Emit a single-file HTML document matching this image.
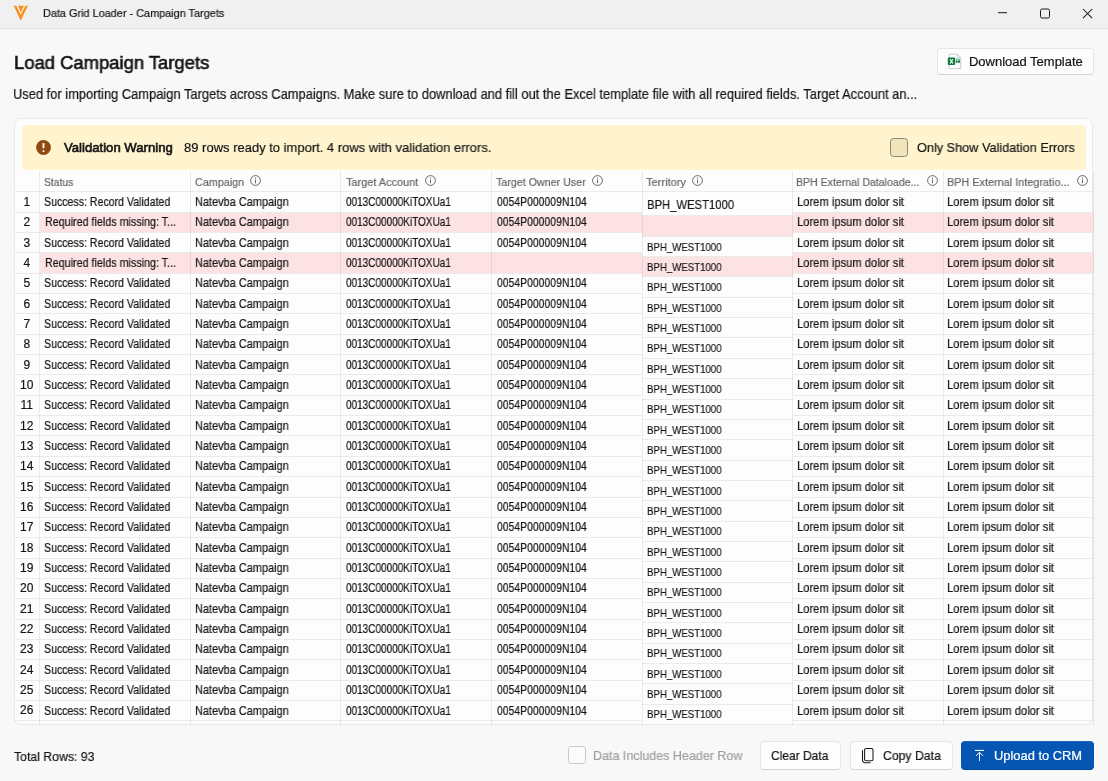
<!DOCTYPE html>
<html><head><meta charset="utf-8">
<style>
*{box-sizing:border-box;margin:0;padding:0}
html,body{width:1108px;height:781px;overflow:hidden;background:#f8f8f8;font-family:"Liberation Sans",sans-serif;color:#141414}
.abs{position:absolute}
.tx{position:absolute;white-space:nowrap;transform-origin:0 0;will-change:transform}
#titlebar{position:absolute;left:0;top:0;width:1108px;height:29px;background:#f0f0f0;border-bottom:1px solid #e2e2e2}
.btn{position:absolute;background:#fdfdfd;border:1px solid #e5e5e5;border-bottom-color:#d2d2d2;border-radius:4px}
#card{position:absolute;left:14px;top:118px;width:1078.5px;height:607px;background:#fdfdfd;border:1px solid #eaeaea;border-radius:7px}
#banner{position:absolute;left:21.5px;top:124.7px;width:1064.5px;height:45px;background:#fff4ce;border-radius:3.5px}
#grid{position:absolute;left:14px;top:170.5px;width:1080px;height:554.5px;overflow:hidden;border-bottom-left-radius:6px}
.hl{position:absolute;left:0;width:1080px;height:1px;background:#ebebeb}
.pink{position:absolute;left:25.5px;width:1054.5px;background:#fde2e4}
.tc{position:absolute;width:150.60px;border-top:1px solid #ebebeb}
.vl{position:absolute;top:0;width:1px;height:554.5px;background:rgba(0,0,0,0.075)}
.num{position:absolute;left:14px;width:25.5px;text-align:center;white-space:nowrap;color:#141414;will-change:transform;-webkit-text-stroke:0.2px #141414}
</style></head><body>
<div id="titlebar"></div>
<svg class="abs" style="left:0;top:0" width="40" height="28" viewBox="0 0 40 28">
  <polygon points="13.8,5.8 16.3,5.8 20.7,14.7 25.4,5.8 28.0,5.8 20.9,20.2 20.4,20.2" fill="#f8911c"/>
  <polygon points="18.0,5.8 23.9,5.8 20.9,12.2" fill="#f8911c"/>
</svg>
<svg class="abs" style="left:997px;top:8px" width="12" height="10" viewBox="0 0 12 10"><rect x="1" y="4.2" width="9" height="1" fill="#1a1a1a"/></svg>
<svg class="abs" style="left:1039px;top:8px" width="12" height="12" viewBox="0 0 12 12"><rect x="1.5" y="1" width="9" height="9" rx="1.6" fill="none" stroke="#1a1a1a" stroke-width="1"/></svg>
<svg class="abs" style="left:1082px;top:8px" width="12" height="12" viewBox="0 0 12 12"><path d="M1 1 L10.2 10.2 M10.2 1 L1 10.2" stroke="#1a1a1a" stroke-width="1.05" fill="none"/></svg>

<div class="btn" style="left:936.5px;top:47.5px;width:157px;height:27.5px"></div>
<svg class="abs" style="left:947px;top:53px" width="15" height="17" viewBox="0 0 15 17">
  <path d="M2.2 1.2 H10.4 L13.7 4.5 V15.6 H2.2 Z" fill="#fff" stroke="#c4c4c4" stroke-width="0.9"/>
  <path d="M10.4 1.2 V4.5 H13.7" fill="none" stroke="#c4c4c4" stroke-width="0.8"/>
  <rect x="8.8" y="5.7" width="1.8" height="2.1" fill="#5cc993"/><rect x="11.0" y="5.7" width="2.0" height="2.1" fill="#5cc993"/>
  <rect x="8.8" y="7.8" width="1.8" height="1.9" fill="#1d6e40"/><rect x="11.0" y="7.8" width="2.0" height="1.9" fill="#1d6e40"/>
  <rect x="0.8" y="4.5" width="7.4" height="7.6" rx="1" fill="#107c41"/>
  <path d="M3.1 6.3 L5.9 10.5 M5.9 6.3 L3.1 10.5" stroke="#fff" stroke-width="1.15"/>
</svg>

<div id="card"></div>
<div id="banner"></div>
<svg class="abs" style="left:35.5px;top:140px" width="15" height="15" viewBox="0 0 15 15"><circle cx="7.5" cy="7.5" r="7.4" fill="#8f4b0f"/><rect x="6.55" y="3.1" width="1.9" height="5.2" rx="0.6" fill="#fff"/><rect x="6.55" y="10.2" width="1.9" height="1.7" rx="0.5" fill="#fff"/></svg>
<div class="abs" style="left:889.5px;top:138px;width:18.5px;height:18.5px;border:1px solid #8b8878;background:#f1e4b9;border-radius:3.5px"></div>

<div id="grid">
<div class="hl" style="top:20.90px"></div>
<div class="hl" style="top:41.24px"></div>
<div class="pink" style="top:42.24px;height:19.34px"></div>
<div class="hl" style="top:61.58px"></div>
<div class="hl" style="top:81.92px"></div>
<div class="pink" style="top:82.92px;height:19.34px"></div>
<div class="hl" style="top:102.26px"></div>
<div class="hl" style="top:122.60px"></div>
<div class="hl" style="top:142.94px"></div>
<div class="hl" style="top:163.28px"></div>
<div class="hl" style="top:183.62px"></div>
<div class="hl" style="top:203.96px"></div>
<div class="hl" style="top:224.30px"></div>
<div class="hl" style="top:244.64px"></div>
<div class="hl" style="top:264.98px"></div>
<div class="hl" style="top:285.32px"></div>
<div class="hl" style="top:305.66px"></div>
<div class="hl" style="top:326.00px"></div>
<div class="hl" style="top:346.34px"></div>
<div class="hl" style="top:366.68px"></div>
<div class="hl" style="top:387.02px"></div>
<div class="hl" style="top:407.36px"></div>
<div class="hl" style="top:427.70px"></div>
<div class="hl" style="top:448.04px"></div>
<div class="hl" style="top:468.38px"></div>
<div class="hl" style="top:488.72px"></div>
<div class="hl" style="top:509.06px"></div>
<div class="hl" style="top:529.40px"></div>
<div class="hl" style="top:549.74px"></div>
<div class="tc" style="left:628.00px;top:20.90px;height:24.04px;background:#fdfdfd"></div>
<div class="tc" style="left:628.00px;top:44.94px;height:20.34px;background:#fde2e4"></div>
<div class="tc" style="left:628.00px;top:65.28px;height:20.34px;background:#fdfdfd"></div>
<div class="tc" style="left:628.00px;top:85.62px;height:20.34px;background:#fde2e4"></div>
<div class="tc" style="left:628.00px;top:105.96px;height:20.34px;background:#fdfdfd"></div>
<div class="tc" style="left:628.00px;top:126.30px;height:20.34px;background:#fdfdfd"></div>
<div class="tc" style="left:628.00px;top:146.64px;height:20.34px;background:#fdfdfd"></div>
<div class="tc" style="left:628.00px;top:166.98px;height:20.34px;background:#fdfdfd"></div>
<div class="tc" style="left:628.00px;top:187.32px;height:20.34px;background:#fdfdfd"></div>
<div class="tc" style="left:628.00px;top:207.66px;height:20.34px;background:#fdfdfd"></div>
<div class="tc" style="left:628.00px;top:228.00px;height:20.34px;background:#fdfdfd"></div>
<div class="tc" style="left:628.00px;top:248.34px;height:20.34px;background:#fdfdfd"></div>
<div class="tc" style="left:628.00px;top:268.68px;height:20.34px;background:#fdfdfd"></div>
<div class="tc" style="left:628.00px;top:289.02px;height:20.34px;background:#fdfdfd"></div>
<div class="tc" style="left:628.00px;top:309.36px;height:20.34px;background:#fdfdfd"></div>
<div class="tc" style="left:628.00px;top:329.70px;height:20.34px;background:#fdfdfd"></div>
<div class="tc" style="left:628.00px;top:350.04px;height:20.34px;background:#fdfdfd"></div>
<div class="tc" style="left:628.00px;top:370.38px;height:20.34px;background:#fdfdfd"></div>
<div class="tc" style="left:628.00px;top:390.72px;height:20.34px;background:#fdfdfd"></div>
<div class="tc" style="left:628.00px;top:411.06px;height:20.34px;background:#fdfdfd"></div>
<div class="tc" style="left:628.00px;top:431.40px;height:20.34px;background:#fdfdfd"></div>
<div class="tc" style="left:628.00px;top:451.74px;height:20.34px;background:#fdfdfd"></div>
<div class="tc" style="left:628.00px;top:472.08px;height:20.34px;background:#fdfdfd"></div>
<div class="tc" style="left:628.00px;top:492.42px;height:20.34px;background:#fdfdfd"></div>
<div class="tc" style="left:628.00px;top:512.76px;height:20.34px;background:#fdfdfd"></div>
<div class="tc" style="left:628.00px;top:533.10px;height:20.34px;background:#fdfdfd"></div>
<div class="tc" style="left:628.00px;top:553.44px;height:20.34px;background:#fdfdfd"></div>
<div class="vl" style="left:25.00px"></div>
<div class="vl" style="left:175.90px"></div>
<div class="vl" style="left:326.10px"></div>
<div class="vl" style="left:476.90px"></div>
<div class="vl" style="left:627.50px"></div>
<div class="vl" style="left:778.10px"></div>
<div class="vl" style="left:928.50px"></div>
<div class="vl" style="left:1078.80px"></div>
</div>
<div class="abs" style="left:250.1px;top:175.1px;line-height:0"><svg width="11" height="11" viewBox="0 0 11 11"><circle cx="5.5" cy="5.5" r="4.9" fill="none" stroke="#606060" stroke-width="0.95"/><rect x="5.05" y="4.6" width="0.95" height="3.6" fill="#606060"/><circle cx="5.5" cy="3.2" r="0.6" fill="#606060"/></svg></div><div class="abs" style="left:425.0px;top:175.1px;line-height:0"><svg width="11" height="11" viewBox="0 0 11 11"><circle cx="5.5" cy="5.5" r="4.9" fill="none" stroke="#606060" stroke-width="0.95"/><rect x="5.05" y="4.6" width="0.95" height="3.6" fill="#606060"/><circle cx="5.5" cy="3.2" r="0.6" fill="#606060"/></svg></div><div class="abs" style="left:591.8px;top:175.1px;line-height:0"><svg width="11" height="11" viewBox="0 0 11 11"><circle cx="5.5" cy="5.5" r="4.9" fill="none" stroke="#606060" stroke-width="0.95"/><rect x="5.05" y="4.6" width="0.95" height="3.6" fill="#606060"/><circle cx="5.5" cy="3.2" r="0.6" fill="#606060"/></svg></div><div class="abs" style="left:692.1px;top:175.1px;line-height:0"><svg width="11" height="11" viewBox="0 0 11 11"><circle cx="5.5" cy="5.5" r="4.9" fill="none" stroke="#606060" stroke-width="0.95"/><rect x="5.05" y="4.6" width="0.95" height="3.6" fill="#606060"/><circle cx="5.5" cy="3.2" r="0.6" fill="#606060"/></svg></div><div class="abs" style="left:927.2px;top:175.1px;line-height:0"><svg width="11" height="11" viewBox="0 0 11 11"><circle cx="5.5" cy="5.5" r="4.9" fill="none" stroke="#606060" stroke-width="0.95"/><rect x="5.05" y="4.6" width="0.95" height="3.6" fill="#606060"/><circle cx="5.5" cy="3.2" r="0.6" fill="#606060"/></svg></div><div class="abs" style="left:1077.2px;top:175.1px;line-height:0"><svg width="11" height="11" viewBox="0 0 11 11"><circle cx="5.5" cy="5.5" r="4.9" fill="none" stroke="#606060" stroke-width="0.95"/><rect x="5.05" y="4.6" width="0.95" height="3.6" fill="#606060"/><circle cx="5.5" cy="3.2" r="0.6" fill="#606060"/></svg></div>
<div class="abs" style="left:0;top:0;width:1108px;height:724.5px;overflow:hidden">
<div class="num" style="top:195.84px;font-size:12.0px;line-height:12.0px">1</div>
<div class="tx" style="left:44.23px;top:196.00px;font-size:12.2px;line-height:12.2px;transform:scaleX(0.8681);color:#141414;-webkit-text-stroke:0.2px #141414;">Success: Record Validated</div>
<div class="tx" style="left:195.30px;top:196.00px;font-size:12.2px;line-height:12.2px;transform:scaleX(0.8990);color:#141414;-webkit-text-stroke:0.2px #141414;">Natevba Campaign</div>
<div class="tx" style="left:346.00px;top:196.00px;font-size:12.2px;line-height:12.2px;transform:scaleX(0.8203);color:#141414;-webkit-text-stroke:0.2px #141414;">0013C00000KiTOXUa1</div>
<div class="tx" style="left:496.70px;top:196.00px;font-size:12.2px;line-height:12.2px;transform:scaleX(0.8543);color:#141414;-webkit-text-stroke:0.2px #141414;">0054P000009N104</div>
<div class="tx" style="left:796.88px;top:196.00px;font-size:12.2px;line-height:12.2px;transform:scaleX(0.9181);color:#141414;-webkit-text-stroke:0.2px #141414;">Lorem ipsum dolor sit</div>
<div class="tx" style="left:947.28px;top:196.00px;font-size:12.2px;line-height:12.2px;transform:scaleX(0.9181);color:#141414;-webkit-text-stroke:0.2px #141414;">Lorem ipsum dolor sit</div>
<div class="tx" style="left:647.08px;top:198.00px;font-size:13.7px;line-height:13.7px;transform:scaleX(0.8229);color:#141414;-webkit-text-stroke:0.2px #141414;">BPH_WEST1000</div>
<div class="num" style="top:216.18px;font-size:12.0px;line-height:12.0px">2</div>
<div class="tx" style="left:44.82px;top:216.34px;font-size:12.2px;line-height:12.2px;transform:scaleX(0.8803);color:#141414;-webkit-text-stroke:0.2px #141414;">Required fields missing: T...</div>
<div class="tx" style="left:195.30px;top:216.34px;font-size:12.2px;line-height:12.2px;transform:scaleX(0.8990);color:#141414;-webkit-text-stroke:0.2px #141414;">Natevba Campaign</div>
<div class="tx" style="left:346.00px;top:216.34px;font-size:12.2px;line-height:12.2px;transform:scaleX(0.8203);color:#141414;-webkit-text-stroke:0.2px #141414;">0013C00000KiTOXUa1</div>
<div class="tx" style="left:496.70px;top:216.34px;font-size:12.2px;line-height:12.2px;transform:scaleX(0.8543);color:#141414;-webkit-text-stroke:0.2px #141414;">0054P000009N104</div>
<div class="tx" style="left:796.88px;top:216.34px;font-size:12.2px;line-height:12.2px;transform:scaleX(0.9181);color:#141414;-webkit-text-stroke:0.2px #141414;">Lorem ipsum dolor sit</div>
<div class="tx" style="left:947.28px;top:216.34px;font-size:12.2px;line-height:12.2px;transform:scaleX(0.9181);color:#141414;-webkit-text-stroke:0.2px #141414;">Lorem ipsum dolor sit</div>
<div class="num" style="top:236.52px;font-size:12.0px;line-height:12.0px">3</div>
<div class="tx" style="left:44.23px;top:236.68px;font-size:12.2px;line-height:12.2px;transform:scaleX(0.8681);color:#141414;-webkit-text-stroke:0.2px #141414;">Success: Record Validated</div>
<div class="tx" style="left:195.30px;top:236.68px;font-size:12.2px;line-height:12.2px;transform:scaleX(0.8990);color:#141414;-webkit-text-stroke:0.2px #141414;">Natevba Campaign</div>
<div class="tx" style="left:346.00px;top:236.68px;font-size:12.2px;line-height:12.2px;transform:scaleX(0.8203);color:#141414;-webkit-text-stroke:0.2px #141414;">0013C00000KiTOXUa1</div>
<div class="tx" style="left:496.70px;top:236.68px;font-size:12.2px;line-height:12.2px;transform:scaleX(0.8543);color:#141414;-webkit-text-stroke:0.2px #141414;">0054P000009N104</div>
<div class="tx" style="left:796.88px;top:236.68px;font-size:12.2px;line-height:12.2px;transform:scaleX(0.9181);color:#141414;-webkit-text-stroke:0.2px #141414;">Lorem ipsum dolor sit</div>
<div class="tx" style="left:947.28px;top:236.68px;font-size:12.2px;line-height:12.2px;transform:scaleX(0.9181);color:#141414;-webkit-text-stroke:0.2px #141414;">Lorem ipsum dolor sit</div>
<div class="tx" style="left:647.15px;top:241.66px;font-size:11.4px;line-height:11.4px;transform:scaleX(0.8471);color:#141414;-webkit-text-stroke:0.2px #141414;">BPH_WEST1000</div>
<div class="num" style="top:256.86px;font-size:12.0px;line-height:12.0px">4</div>
<div class="tx" style="left:44.82px;top:257.02px;font-size:12.2px;line-height:12.2px;transform:scaleX(0.8803);color:#141414;-webkit-text-stroke:0.2px #141414;">Required fields missing: T...</div>
<div class="tx" style="left:195.30px;top:257.02px;font-size:12.2px;line-height:12.2px;transform:scaleX(0.8990);color:#141414;-webkit-text-stroke:0.2px #141414;">Natevba Campaign</div>
<div class="tx" style="left:346.00px;top:257.02px;font-size:12.2px;line-height:12.2px;transform:scaleX(0.8203);color:#141414;-webkit-text-stroke:0.2px #141414;">0013C00000KiTOXUa1</div>
<div class="tx" style="left:796.88px;top:257.02px;font-size:12.2px;line-height:12.2px;transform:scaleX(0.9181);color:#141414;-webkit-text-stroke:0.2px #141414;">Lorem ipsum dolor sit</div>
<div class="tx" style="left:947.28px;top:257.02px;font-size:12.2px;line-height:12.2px;transform:scaleX(0.9181);color:#141414;-webkit-text-stroke:0.2px #141414;">Lorem ipsum dolor sit</div>
<div class="tx" style="left:647.15px;top:262.00px;font-size:11.4px;line-height:11.4px;transform:scaleX(0.8471);color:#141414;-webkit-text-stroke:0.2px #141414;">BPH_WEST1000</div>
<div class="num" style="top:277.20px;font-size:12.0px;line-height:12.0px">5</div>
<div class="tx" style="left:44.23px;top:277.36px;font-size:12.2px;line-height:12.2px;transform:scaleX(0.8681);color:#141414;-webkit-text-stroke:0.2px #141414;">Success: Record Validated</div>
<div class="tx" style="left:195.30px;top:277.36px;font-size:12.2px;line-height:12.2px;transform:scaleX(0.8990);color:#141414;-webkit-text-stroke:0.2px #141414;">Natevba Campaign</div>
<div class="tx" style="left:346.00px;top:277.36px;font-size:12.2px;line-height:12.2px;transform:scaleX(0.8203);color:#141414;-webkit-text-stroke:0.2px #141414;">0013C00000KiTOXUa1</div>
<div class="tx" style="left:496.70px;top:277.36px;font-size:12.2px;line-height:12.2px;transform:scaleX(0.8543);color:#141414;-webkit-text-stroke:0.2px #141414;">0054P000009N104</div>
<div class="tx" style="left:796.88px;top:277.36px;font-size:12.2px;line-height:12.2px;transform:scaleX(0.9181);color:#141414;-webkit-text-stroke:0.2px #141414;">Lorem ipsum dolor sit</div>
<div class="tx" style="left:947.28px;top:277.36px;font-size:12.2px;line-height:12.2px;transform:scaleX(0.9181);color:#141414;-webkit-text-stroke:0.2px #141414;">Lorem ipsum dolor sit</div>
<div class="tx" style="left:647.15px;top:282.34px;font-size:11.4px;line-height:11.4px;transform:scaleX(0.8471);color:#141414;-webkit-text-stroke:0.2px #141414;">BPH_WEST1000</div>
<div class="num" style="top:297.54px;font-size:12.0px;line-height:12.0px">6</div>
<div class="tx" style="left:44.23px;top:297.70px;font-size:12.2px;line-height:12.2px;transform:scaleX(0.8681);color:#141414;-webkit-text-stroke:0.2px #141414;">Success: Record Validated</div>
<div class="tx" style="left:195.30px;top:297.70px;font-size:12.2px;line-height:12.2px;transform:scaleX(0.8990);color:#141414;-webkit-text-stroke:0.2px #141414;">Natevba Campaign</div>
<div class="tx" style="left:346.00px;top:297.70px;font-size:12.2px;line-height:12.2px;transform:scaleX(0.8203);color:#141414;-webkit-text-stroke:0.2px #141414;">0013C00000KiTOXUa1</div>
<div class="tx" style="left:496.70px;top:297.70px;font-size:12.2px;line-height:12.2px;transform:scaleX(0.8543);color:#141414;-webkit-text-stroke:0.2px #141414;">0054P000009N104</div>
<div class="tx" style="left:796.88px;top:297.70px;font-size:12.2px;line-height:12.2px;transform:scaleX(0.9181);color:#141414;-webkit-text-stroke:0.2px #141414;">Lorem ipsum dolor sit</div>
<div class="tx" style="left:947.28px;top:297.70px;font-size:12.2px;line-height:12.2px;transform:scaleX(0.9181);color:#141414;-webkit-text-stroke:0.2px #141414;">Lorem ipsum dolor sit</div>
<div class="tx" style="left:647.15px;top:302.68px;font-size:11.4px;line-height:11.4px;transform:scaleX(0.8471);color:#141414;-webkit-text-stroke:0.2px #141414;">BPH_WEST1000</div>
<div class="num" style="top:317.88px;font-size:12.0px;line-height:12.0px">7</div>
<div class="tx" style="left:44.23px;top:318.04px;font-size:12.2px;line-height:12.2px;transform:scaleX(0.8681);color:#141414;-webkit-text-stroke:0.2px #141414;">Success: Record Validated</div>
<div class="tx" style="left:195.30px;top:318.04px;font-size:12.2px;line-height:12.2px;transform:scaleX(0.8990);color:#141414;-webkit-text-stroke:0.2px #141414;">Natevba Campaign</div>
<div class="tx" style="left:346.00px;top:318.04px;font-size:12.2px;line-height:12.2px;transform:scaleX(0.8203);color:#141414;-webkit-text-stroke:0.2px #141414;">0013C00000KiTOXUa1</div>
<div class="tx" style="left:496.70px;top:318.04px;font-size:12.2px;line-height:12.2px;transform:scaleX(0.8543);color:#141414;-webkit-text-stroke:0.2px #141414;">0054P000009N104</div>
<div class="tx" style="left:796.88px;top:318.04px;font-size:12.2px;line-height:12.2px;transform:scaleX(0.9181);color:#141414;-webkit-text-stroke:0.2px #141414;">Lorem ipsum dolor sit</div>
<div class="tx" style="left:947.28px;top:318.04px;font-size:12.2px;line-height:12.2px;transform:scaleX(0.9181);color:#141414;-webkit-text-stroke:0.2px #141414;">Lorem ipsum dolor sit</div>
<div class="tx" style="left:647.15px;top:323.02px;font-size:11.4px;line-height:11.4px;transform:scaleX(0.8471);color:#141414;-webkit-text-stroke:0.2px #141414;">BPH_WEST1000</div>
<div class="num" style="top:338.22px;font-size:12.0px;line-height:12.0px">8</div>
<div class="tx" style="left:44.23px;top:338.38px;font-size:12.2px;line-height:12.2px;transform:scaleX(0.8681);color:#141414;-webkit-text-stroke:0.2px #141414;">Success: Record Validated</div>
<div class="tx" style="left:195.30px;top:338.38px;font-size:12.2px;line-height:12.2px;transform:scaleX(0.8990);color:#141414;-webkit-text-stroke:0.2px #141414;">Natevba Campaign</div>
<div class="tx" style="left:346.00px;top:338.38px;font-size:12.2px;line-height:12.2px;transform:scaleX(0.8203);color:#141414;-webkit-text-stroke:0.2px #141414;">0013C00000KiTOXUa1</div>
<div class="tx" style="left:496.70px;top:338.38px;font-size:12.2px;line-height:12.2px;transform:scaleX(0.8543);color:#141414;-webkit-text-stroke:0.2px #141414;">0054P000009N104</div>
<div class="tx" style="left:796.88px;top:338.38px;font-size:12.2px;line-height:12.2px;transform:scaleX(0.9181);color:#141414;-webkit-text-stroke:0.2px #141414;">Lorem ipsum dolor sit</div>
<div class="tx" style="left:947.28px;top:338.38px;font-size:12.2px;line-height:12.2px;transform:scaleX(0.9181);color:#141414;-webkit-text-stroke:0.2px #141414;">Lorem ipsum dolor sit</div>
<div class="tx" style="left:647.15px;top:343.36px;font-size:11.4px;line-height:11.4px;transform:scaleX(0.8471);color:#141414;-webkit-text-stroke:0.2px #141414;">BPH_WEST1000</div>
<div class="num" style="top:358.56px;font-size:12.0px;line-height:12.0px">9</div>
<div class="tx" style="left:44.23px;top:358.72px;font-size:12.2px;line-height:12.2px;transform:scaleX(0.8681);color:#141414;-webkit-text-stroke:0.2px #141414;">Success: Record Validated</div>
<div class="tx" style="left:195.30px;top:358.72px;font-size:12.2px;line-height:12.2px;transform:scaleX(0.8990);color:#141414;-webkit-text-stroke:0.2px #141414;">Natevba Campaign</div>
<div class="tx" style="left:346.00px;top:358.72px;font-size:12.2px;line-height:12.2px;transform:scaleX(0.8203);color:#141414;-webkit-text-stroke:0.2px #141414;">0013C00000KiTOXUa1</div>
<div class="tx" style="left:496.70px;top:358.72px;font-size:12.2px;line-height:12.2px;transform:scaleX(0.8543);color:#141414;-webkit-text-stroke:0.2px #141414;">0054P000009N104</div>
<div class="tx" style="left:796.88px;top:358.72px;font-size:12.2px;line-height:12.2px;transform:scaleX(0.9181);color:#141414;-webkit-text-stroke:0.2px #141414;">Lorem ipsum dolor sit</div>
<div class="tx" style="left:947.28px;top:358.72px;font-size:12.2px;line-height:12.2px;transform:scaleX(0.9181);color:#141414;-webkit-text-stroke:0.2px #141414;">Lorem ipsum dolor sit</div>
<div class="tx" style="left:647.15px;top:363.70px;font-size:11.4px;line-height:11.4px;transform:scaleX(0.8471);color:#141414;-webkit-text-stroke:0.2px #141414;">BPH_WEST1000</div>
<div class="num" style="top:378.90px;font-size:12.0px;line-height:12.0px">10</div>
<div class="tx" style="left:44.23px;top:379.06px;font-size:12.2px;line-height:12.2px;transform:scaleX(0.8681);color:#141414;-webkit-text-stroke:0.2px #141414;">Success: Record Validated</div>
<div class="tx" style="left:195.30px;top:379.06px;font-size:12.2px;line-height:12.2px;transform:scaleX(0.8990);color:#141414;-webkit-text-stroke:0.2px #141414;">Natevba Campaign</div>
<div class="tx" style="left:346.00px;top:379.06px;font-size:12.2px;line-height:12.2px;transform:scaleX(0.8203);color:#141414;-webkit-text-stroke:0.2px #141414;">0013C00000KiTOXUa1</div>
<div class="tx" style="left:496.70px;top:379.06px;font-size:12.2px;line-height:12.2px;transform:scaleX(0.8543);color:#141414;-webkit-text-stroke:0.2px #141414;">0054P000009N104</div>
<div class="tx" style="left:796.88px;top:379.06px;font-size:12.2px;line-height:12.2px;transform:scaleX(0.9181);color:#141414;-webkit-text-stroke:0.2px #141414;">Lorem ipsum dolor sit</div>
<div class="tx" style="left:947.28px;top:379.06px;font-size:12.2px;line-height:12.2px;transform:scaleX(0.9181);color:#141414;-webkit-text-stroke:0.2px #141414;">Lorem ipsum dolor sit</div>
<div class="tx" style="left:647.15px;top:384.04px;font-size:11.4px;line-height:11.4px;transform:scaleX(0.8471);color:#141414;-webkit-text-stroke:0.2px #141414;">BPH_WEST1000</div>
<div class="num" style="top:399.24px;font-size:12.0px;line-height:12.0px">11</div>
<div class="tx" style="left:44.23px;top:399.40px;font-size:12.2px;line-height:12.2px;transform:scaleX(0.8681);color:#141414;-webkit-text-stroke:0.2px #141414;">Success: Record Validated</div>
<div class="tx" style="left:195.30px;top:399.40px;font-size:12.2px;line-height:12.2px;transform:scaleX(0.8990);color:#141414;-webkit-text-stroke:0.2px #141414;">Natevba Campaign</div>
<div class="tx" style="left:346.00px;top:399.40px;font-size:12.2px;line-height:12.2px;transform:scaleX(0.8203);color:#141414;-webkit-text-stroke:0.2px #141414;">0013C00000KiTOXUa1</div>
<div class="tx" style="left:496.70px;top:399.40px;font-size:12.2px;line-height:12.2px;transform:scaleX(0.8543);color:#141414;-webkit-text-stroke:0.2px #141414;">0054P000009N104</div>
<div class="tx" style="left:796.88px;top:399.40px;font-size:12.2px;line-height:12.2px;transform:scaleX(0.9181);color:#141414;-webkit-text-stroke:0.2px #141414;">Lorem ipsum dolor sit</div>
<div class="tx" style="left:947.28px;top:399.40px;font-size:12.2px;line-height:12.2px;transform:scaleX(0.9181);color:#141414;-webkit-text-stroke:0.2px #141414;">Lorem ipsum dolor sit</div>
<div class="tx" style="left:647.15px;top:404.38px;font-size:11.4px;line-height:11.4px;transform:scaleX(0.8471);color:#141414;-webkit-text-stroke:0.2px #141414;">BPH_WEST1000</div>
<div class="num" style="top:419.58px;font-size:12.0px;line-height:12.0px">12</div>
<div class="tx" style="left:44.23px;top:419.74px;font-size:12.2px;line-height:12.2px;transform:scaleX(0.8681);color:#141414;-webkit-text-stroke:0.2px #141414;">Success: Record Validated</div>
<div class="tx" style="left:195.30px;top:419.74px;font-size:12.2px;line-height:12.2px;transform:scaleX(0.8990);color:#141414;-webkit-text-stroke:0.2px #141414;">Natevba Campaign</div>
<div class="tx" style="left:346.00px;top:419.74px;font-size:12.2px;line-height:12.2px;transform:scaleX(0.8203);color:#141414;-webkit-text-stroke:0.2px #141414;">0013C00000KiTOXUa1</div>
<div class="tx" style="left:496.70px;top:419.74px;font-size:12.2px;line-height:12.2px;transform:scaleX(0.8543);color:#141414;-webkit-text-stroke:0.2px #141414;">0054P000009N104</div>
<div class="tx" style="left:796.88px;top:419.74px;font-size:12.2px;line-height:12.2px;transform:scaleX(0.9181);color:#141414;-webkit-text-stroke:0.2px #141414;">Lorem ipsum dolor sit</div>
<div class="tx" style="left:947.28px;top:419.74px;font-size:12.2px;line-height:12.2px;transform:scaleX(0.9181);color:#141414;-webkit-text-stroke:0.2px #141414;">Lorem ipsum dolor sit</div>
<div class="tx" style="left:647.15px;top:424.72px;font-size:11.4px;line-height:11.4px;transform:scaleX(0.8471);color:#141414;-webkit-text-stroke:0.2px #141414;">BPH_WEST1000</div>
<div class="num" style="top:439.92px;font-size:12.0px;line-height:12.0px">13</div>
<div class="tx" style="left:44.23px;top:440.08px;font-size:12.2px;line-height:12.2px;transform:scaleX(0.8681);color:#141414;-webkit-text-stroke:0.2px #141414;">Success: Record Validated</div>
<div class="tx" style="left:195.30px;top:440.08px;font-size:12.2px;line-height:12.2px;transform:scaleX(0.8990);color:#141414;-webkit-text-stroke:0.2px #141414;">Natevba Campaign</div>
<div class="tx" style="left:346.00px;top:440.08px;font-size:12.2px;line-height:12.2px;transform:scaleX(0.8203);color:#141414;-webkit-text-stroke:0.2px #141414;">0013C00000KiTOXUa1</div>
<div class="tx" style="left:496.70px;top:440.08px;font-size:12.2px;line-height:12.2px;transform:scaleX(0.8543);color:#141414;-webkit-text-stroke:0.2px #141414;">0054P000009N104</div>
<div class="tx" style="left:796.88px;top:440.08px;font-size:12.2px;line-height:12.2px;transform:scaleX(0.9181);color:#141414;-webkit-text-stroke:0.2px #141414;">Lorem ipsum dolor sit</div>
<div class="tx" style="left:947.28px;top:440.08px;font-size:12.2px;line-height:12.2px;transform:scaleX(0.9181);color:#141414;-webkit-text-stroke:0.2px #141414;">Lorem ipsum dolor sit</div>
<div class="tx" style="left:647.15px;top:445.06px;font-size:11.4px;line-height:11.4px;transform:scaleX(0.8471);color:#141414;-webkit-text-stroke:0.2px #141414;">BPH_WEST1000</div>
<div class="num" style="top:460.26px;font-size:12.0px;line-height:12.0px">14</div>
<div class="tx" style="left:44.23px;top:460.42px;font-size:12.2px;line-height:12.2px;transform:scaleX(0.8681);color:#141414;-webkit-text-stroke:0.2px #141414;">Success: Record Validated</div>
<div class="tx" style="left:195.30px;top:460.42px;font-size:12.2px;line-height:12.2px;transform:scaleX(0.8990);color:#141414;-webkit-text-stroke:0.2px #141414;">Natevba Campaign</div>
<div class="tx" style="left:346.00px;top:460.42px;font-size:12.2px;line-height:12.2px;transform:scaleX(0.8203);color:#141414;-webkit-text-stroke:0.2px #141414;">0013C00000KiTOXUa1</div>
<div class="tx" style="left:496.70px;top:460.42px;font-size:12.2px;line-height:12.2px;transform:scaleX(0.8543);color:#141414;-webkit-text-stroke:0.2px #141414;">0054P000009N104</div>
<div class="tx" style="left:796.88px;top:460.42px;font-size:12.2px;line-height:12.2px;transform:scaleX(0.9181);color:#141414;-webkit-text-stroke:0.2px #141414;">Lorem ipsum dolor sit</div>
<div class="tx" style="left:947.28px;top:460.42px;font-size:12.2px;line-height:12.2px;transform:scaleX(0.9181);color:#141414;-webkit-text-stroke:0.2px #141414;">Lorem ipsum dolor sit</div>
<div class="tx" style="left:647.15px;top:465.40px;font-size:11.4px;line-height:11.4px;transform:scaleX(0.8471);color:#141414;-webkit-text-stroke:0.2px #141414;">BPH_WEST1000</div>
<div class="num" style="top:480.60px;font-size:12.0px;line-height:12.0px">15</div>
<div class="tx" style="left:44.23px;top:480.76px;font-size:12.2px;line-height:12.2px;transform:scaleX(0.8681);color:#141414;-webkit-text-stroke:0.2px #141414;">Success: Record Validated</div>
<div class="tx" style="left:195.30px;top:480.76px;font-size:12.2px;line-height:12.2px;transform:scaleX(0.8990);color:#141414;-webkit-text-stroke:0.2px #141414;">Natevba Campaign</div>
<div class="tx" style="left:346.00px;top:480.76px;font-size:12.2px;line-height:12.2px;transform:scaleX(0.8203);color:#141414;-webkit-text-stroke:0.2px #141414;">0013C00000KiTOXUa1</div>
<div class="tx" style="left:496.70px;top:480.76px;font-size:12.2px;line-height:12.2px;transform:scaleX(0.8543);color:#141414;-webkit-text-stroke:0.2px #141414;">0054P000009N104</div>
<div class="tx" style="left:796.88px;top:480.76px;font-size:12.2px;line-height:12.2px;transform:scaleX(0.9181);color:#141414;-webkit-text-stroke:0.2px #141414;">Lorem ipsum dolor sit</div>
<div class="tx" style="left:947.28px;top:480.76px;font-size:12.2px;line-height:12.2px;transform:scaleX(0.9181);color:#141414;-webkit-text-stroke:0.2px #141414;">Lorem ipsum dolor sit</div>
<div class="tx" style="left:647.15px;top:485.74px;font-size:11.4px;line-height:11.4px;transform:scaleX(0.8471);color:#141414;-webkit-text-stroke:0.2px #141414;">BPH_WEST1000</div>
<div class="num" style="top:500.94px;font-size:12.0px;line-height:12.0px">16</div>
<div class="tx" style="left:44.23px;top:501.10px;font-size:12.2px;line-height:12.2px;transform:scaleX(0.8681);color:#141414;-webkit-text-stroke:0.2px #141414;">Success: Record Validated</div>
<div class="tx" style="left:195.30px;top:501.10px;font-size:12.2px;line-height:12.2px;transform:scaleX(0.8990);color:#141414;-webkit-text-stroke:0.2px #141414;">Natevba Campaign</div>
<div class="tx" style="left:346.00px;top:501.10px;font-size:12.2px;line-height:12.2px;transform:scaleX(0.8203);color:#141414;-webkit-text-stroke:0.2px #141414;">0013C00000KiTOXUa1</div>
<div class="tx" style="left:496.70px;top:501.10px;font-size:12.2px;line-height:12.2px;transform:scaleX(0.8543);color:#141414;-webkit-text-stroke:0.2px #141414;">0054P000009N104</div>
<div class="tx" style="left:796.88px;top:501.10px;font-size:12.2px;line-height:12.2px;transform:scaleX(0.9181);color:#141414;-webkit-text-stroke:0.2px #141414;">Lorem ipsum dolor sit</div>
<div class="tx" style="left:947.28px;top:501.10px;font-size:12.2px;line-height:12.2px;transform:scaleX(0.9181);color:#141414;-webkit-text-stroke:0.2px #141414;">Lorem ipsum dolor sit</div>
<div class="tx" style="left:647.15px;top:506.08px;font-size:11.4px;line-height:11.4px;transform:scaleX(0.8471);color:#141414;-webkit-text-stroke:0.2px #141414;">BPH_WEST1000</div>
<div class="num" style="top:521.28px;font-size:12.0px;line-height:12.0px">17</div>
<div class="tx" style="left:44.23px;top:521.44px;font-size:12.2px;line-height:12.2px;transform:scaleX(0.8681);color:#141414;-webkit-text-stroke:0.2px #141414;">Success: Record Validated</div>
<div class="tx" style="left:195.30px;top:521.44px;font-size:12.2px;line-height:12.2px;transform:scaleX(0.8990);color:#141414;-webkit-text-stroke:0.2px #141414;">Natevba Campaign</div>
<div class="tx" style="left:346.00px;top:521.44px;font-size:12.2px;line-height:12.2px;transform:scaleX(0.8203);color:#141414;-webkit-text-stroke:0.2px #141414;">0013C00000KiTOXUa1</div>
<div class="tx" style="left:496.70px;top:521.44px;font-size:12.2px;line-height:12.2px;transform:scaleX(0.8543);color:#141414;-webkit-text-stroke:0.2px #141414;">0054P000009N104</div>
<div class="tx" style="left:796.88px;top:521.44px;font-size:12.2px;line-height:12.2px;transform:scaleX(0.9181);color:#141414;-webkit-text-stroke:0.2px #141414;">Lorem ipsum dolor sit</div>
<div class="tx" style="left:947.28px;top:521.44px;font-size:12.2px;line-height:12.2px;transform:scaleX(0.9181);color:#141414;-webkit-text-stroke:0.2px #141414;">Lorem ipsum dolor sit</div>
<div class="tx" style="left:647.15px;top:526.42px;font-size:11.4px;line-height:11.4px;transform:scaleX(0.8471);color:#141414;-webkit-text-stroke:0.2px #141414;">BPH_WEST1000</div>
<div class="num" style="top:541.62px;font-size:12.0px;line-height:12.0px">18</div>
<div class="tx" style="left:44.23px;top:541.78px;font-size:12.2px;line-height:12.2px;transform:scaleX(0.8681);color:#141414;-webkit-text-stroke:0.2px #141414;">Success: Record Validated</div>
<div class="tx" style="left:195.30px;top:541.78px;font-size:12.2px;line-height:12.2px;transform:scaleX(0.8990);color:#141414;-webkit-text-stroke:0.2px #141414;">Natevba Campaign</div>
<div class="tx" style="left:346.00px;top:541.78px;font-size:12.2px;line-height:12.2px;transform:scaleX(0.8203);color:#141414;-webkit-text-stroke:0.2px #141414;">0013C00000KiTOXUa1</div>
<div class="tx" style="left:496.70px;top:541.78px;font-size:12.2px;line-height:12.2px;transform:scaleX(0.8543);color:#141414;-webkit-text-stroke:0.2px #141414;">0054P000009N104</div>
<div class="tx" style="left:796.88px;top:541.78px;font-size:12.2px;line-height:12.2px;transform:scaleX(0.9181);color:#141414;-webkit-text-stroke:0.2px #141414;">Lorem ipsum dolor sit</div>
<div class="tx" style="left:947.28px;top:541.78px;font-size:12.2px;line-height:12.2px;transform:scaleX(0.9181);color:#141414;-webkit-text-stroke:0.2px #141414;">Lorem ipsum dolor sit</div>
<div class="tx" style="left:647.15px;top:546.76px;font-size:11.4px;line-height:11.4px;transform:scaleX(0.8471);color:#141414;-webkit-text-stroke:0.2px #141414;">BPH_WEST1000</div>
<div class="num" style="top:561.96px;font-size:12.0px;line-height:12.0px">19</div>
<div class="tx" style="left:44.23px;top:562.12px;font-size:12.2px;line-height:12.2px;transform:scaleX(0.8681);color:#141414;-webkit-text-stroke:0.2px #141414;">Success: Record Validated</div>
<div class="tx" style="left:195.30px;top:562.12px;font-size:12.2px;line-height:12.2px;transform:scaleX(0.8990);color:#141414;-webkit-text-stroke:0.2px #141414;">Natevba Campaign</div>
<div class="tx" style="left:346.00px;top:562.12px;font-size:12.2px;line-height:12.2px;transform:scaleX(0.8203);color:#141414;-webkit-text-stroke:0.2px #141414;">0013C00000KiTOXUa1</div>
<div class="tx" style="left:496.70px;top:562.12px;font-size:12.2px;line-height:12.2px;transform:scaleX(0.8543);color:#141414;-webkit-text-stroke:0.2px #141414;">0054P000009N104</div>
<div class="tx" style="left:796.88px;top:562.12px;font-size:12.2px;line-height:12.2px;transform:scaleX(0.9181);color:#141414;-webkit-text-stroke:0.2px #141414;">Lorem ipsum dolor sit</div>
<div class="tx" style="left:947.28px;top:562.12px;font-size:12.2px;line-height:12.2px;transform:scaleX(0.9181);color:#141414;-webkit-text-stroke:0.2px #141414;">Lorem ipsum dolor sit</div>
<div class="tx" style="left:647.15px;top:567.10px;font-size:11.4px;line-height:11.4px;transform:scaleX(0.8471);color:#141414;-webkit-text-stroke:0.2px #141414;">BPH_WEST1000</div>
<div class="num" style="top:582.30px;font-size:12.0px;line-height:12.0px">20</div>
<div class="tx" style="left:44.23px;top:582.46px;font-size:12.2px;line-height:12.2px;transform:scaleX(0.8681);color:#141414;-webkit-text-stroke:0.2px #141414;">Success: Record Validated</div>
<div class="tx" style="left:195.30px;top:582.46px;font-size:12.2px;line-height:12.2px;transform:scaleX(0.8990);color:#141414;-webkit-text-stroke:0.2px #141414;">Natevba Campaign</div>
<div class="tx" style="left:346.00px;top:582.46px;font-size:12.2px;line-height:12.2px;transform:scaleX(0.8203);color:#141414;-webkit-text-stroke:0.2px #141414;">0013C00000KiTOXUa1</div>
<div class="tx" style="left:496.70px;top:582.46px;font-size:12.2px;line-height:12.2px;transform:scaleX(0.8543);color:#141414;-webkit-text-stroke:0.2px #141414;">0054P000009N104</div>
<div class="tx" style="left:796.88px;top:582.46px;font-size:12.2px;line-height:12.2px;transform:scaleX(0.9181);color:#141414;-webkit-text-stroke:0.2px #141414;">Lorem ipsum dolor sit</div>
<div class="tx" style="left:947.28px;top:582.46px;font-size:12.2px;line-height:12.2px;transform:scaleX(0.9181);color:#141414;-webkit-text-stroke:0.2px #141414;">Lorem ipsum dolor sit</div>
<div class="tx" style="left:647.15px;top:587.44px;font-size:11.4px;line-height:11.4px;transform:scaleX(0.8471);color:#141414;-webkit-text-stroke:0.2px #141414;">BPH_WEST1000</div>
<div class="num" style="top:602.64px;font-size:12.0px;line-height:12.0px">21</div>
<div class="tx" style="left:44.23px;top:602.80px;font-size:12.2px;line-height:12.2px;transform:scaleX(0.8681);color:#141414;-webkit-text-stroke:0.2px #141414;">Success: Record Validated</div>
<div class="tx" style="left:195.30px;top:602.80px;font-size:12.2px;line-height:12.2px;transform:scaleX(0.8990);color:#141414;-webkit-text-stroke:0.2px #141414;">Natevba Campaign</div>
<div class="tx" style="left:346.00px;top:602.80px;font-size:12.2px;line-height:12.2px;transform:scaleX(0.8203);color:#141414;-webkit-text-stroke:0.2px #141414;">0013C00000KiTOXUa1</div>
<div class="tx" style="left:496.70px;top:602.80px;font-size:12.2px;line-height:12.2px;transform:scaleX(0.8543);color:#141414;-webkit-text-stroke:0.2px #141414;">0054P000009N104</div>
<div class="tx" style="left:796.88px;top:602.80px;font-size:12.2px;line-height:12.2px;transform:scaleX(0.9181);color:#141414;-webkit-text-stroke:0.2px #141414;">Lorem ipsum dolor sit</div>
<div class="tx" style="left:947.28px;top:602.80px;font-size:12.2px;line-height:12.2px;transform:scaleX(0.9181);color:#141414;-webkit-text-stroke:0.2px #141414;">Lorem ipsum dolor sit</div>
<div class="tx" style="left:647.15px;top:607.78px;font-size:11.4px;line-height:11.4px;transform:scaleX(0.8471);color:#141414;-webkit-text-stroke:0.2px #141414;">BPH_WEST1000</div>
<div class="num" style="top:622.98px;font-size:12.0px;line-height:12.0px">22</div>
<div class="tx" style="left:44.23px;top:623.14px;font-size:12.2px;line-height:12.2px;transform:scaleX(0.8681);color:#141414;-webkit-text-stroke:0.2px #141414;">Success: Record Validated</div>
<div class="tx" style="left:195.30px;top:623.14px;font-size:12.2px;line-height:12.2px;transform:scaleX(0.8990);color:#141414;-webkit-text-stroke:0.2px #141414;">Natevba Campaign</div>
<div class="tx" style="left:346.00px;top:623.14px;font-size:12.2px;line-height:12.2px;transform:scaleX(0.8203);color:#141414;-webkit-text-stroke:0.2px #141414;">0013C00000KiTOXUa1</div>
<div class="tx" style="left:496.70px;top:623.14px;font-size:12.2px;line-height:12.2px;transform:scaleX(0.8543);color:#141414;-webkit-text-stroke:0.2px #141414;">0054P000009N104</div>
<div class="tx" style="left:796.88px;top:623.14px;font-size:12.2px;line-height:12.2px;transform:scaleX(0.9181);color:#141414;-webkit-text-stroke:0.2px #141414;">Lorem ipsum dolor sit</div>
<div class="tx" style="left:947.28px;top:623.14px;font-size:12.2px;line-height:12.2px;transform:scaleX(0.9181);color:#141414;-webkit-text-stroke:0.2px #141414;">Lorem ipsum dolor sit</div>
<div class="tx" style="left:647.15px;top:628.12px;font-size:11.4px;line-height:11.4px;transform:scaleX(0.8471);color:#141414;-webkit-text-stroke:0.2px #141414;">BPH_WEST1000</div>
<div class="num" style="top:643.32px;font-size:12.0px;line-height:12.0px">23</div>
<div class="tx" style="left:44.23px;top:643.48px;font-size:12.2px;line-height:12.2px;transform:scaleX(0.8681);color:#141414;-webkit-text-stroke:0.2px #141414;">Success: Record Validated</div>
<div class="tx" style="left:195.30px;top:643.48px;font-size:12.2px;line-height:12.2px;transform:scaleX(0.8990);color:#141414;-webkit-text-stroke:0.2px #141414;">Natevba Campaign</div>
<div class="tx" style="left:346.00px;top:643.48px;font-size:12.2px;line-height:12.2px;transform:scaleX(0.8203);color:#141414;-webkit-text-stroke:0.2px #141414;">0013C00000KiTOXUa1</div>
<div class="tx" style="left:496.70px;top:643.48px;font-size:12.2px;line-height:12.2px;transform:scaleX(0.8543);color:#141414;-webkit-text-stroke:0.2px #141414;">0054P000009N104</div>
<div class="tx" style="left:796.88px;top:643.48px;font-size:12.2px;line-height:12.2px;transform:scaleX(0.9181);color:#141414;-webkit-text-stroke:0.2px #141414;">Lorem ipsum dolor sit</div>
<div class="tx" style="left:947.28px;top:643.48px;font-size:12.2px;line-height:12.2px;transform:scaleX(0.9181);color:#141414;-webkit-text-stroke:0.2px #141414;">Lorem ipsum dolor sit</div>
<div class="tx" style="left:647.15px;top:648.46px;font-size:11.4px;line-height:11.4px;transform:scaleX(0.8471);color:#141414;-webkit-text-stroke:0.2px #141414;">BPH_WEST1000</div>
<div class="num" style="top:663.66px;font-size:12.0px;line-height:12.0px">24</div>
<div class="tx" style="left:44.23px;top:663.82px;font-size:12.2px;line-height:12.2px;transform:scaleX(0.8681);color:#141414;-webkit-text-stroke:0.2px #141414;">Success: Record Validated</div>
<div class="tx" style="left:195.30px;top:663.82px;font-size:12.2px;line-height:12.2px;transform:scaleX(0.8990);color:#141414;-webkit-text-stroke:0.2px #141414;">Natevba Campaign</div>
<div class="tx" style="left:346.00px;top:663.82px;font-size:12.2px;line-height:12.2px;transform:scaleX(0.8203);color:#141414;-webkit-text-stroke:0.2px #141414;">0013C00000KiTOXUa1</div>
<div class="tx" style="left:496.70px;top:663.82px;font-size:12.2px;line-height:12.2px;transform:scaleX(0.8543);color:#141414;-webkit-text-stroke:0.2px #141414;">0054P000009N104</div>
<div class="tx" style="left:796.88px;top:663.82px;font-size:12.2px;line-height:12.2px;transform:scaleX(0.9181);color:#141414;-webkit-text-stroke:0.2px #141414;">Lorem ipsum dolor sit</div>
<div class="tx" style="left:947.28px;top:663.82px;font-size:12.2px;line-height:12.2px;transform:scaleX(0.9181);color:#141414;-webkit-text-stroke:0.2px #141414;">Lorem ipsum dolor sit</div>
<div class="tx" style="left:647.15px;top:668.80px;font-size:11.4px;line-height:11.4px;transform:scaleX(0.8471);color:#141414;-webkit-text-stroke:0.2px #141414;">BPH_WEST1000</div>
<div class="num" style="top:684.00px;font-size:12.0px;line-height:12.0px">25</div>
<div class="tx" style="left:44.23px;top:684.16px;font-size:12.2px;line-height:12.2px;transform:scaleX(0.8681);color:#141414;-webkit-text-stroke:0.2px #141414;">Success: Record Validated</div>
<div class="tx" style="left:195.30px;top:684.16px;font-size:12.2px;line-height:12.2px;transform:scaleX(0.8990);color:#141414;-webkit-text-stroke:0.2px #141414;">Natevba Campaign</div>
<div class="tx" style="left:346.00px;top:684.16px;font-size:12.2px;line-height:12.2px;transform:scaleX(0.8203);color:#141414;-webkit-text-stroke:0.2px #141414;">0013C00000KiTOXUa1</div>
<div class="tx" style="left:496.70px;top:684.16px;font-size:12.2px;line-height:12.2px;transform:scaleX(0.8543);color:#141414;-webkit-text-stroke:0.2px #141414;">0054P000009N104</div>
<div class="tx" style="left:796.88px;top:684.16px;font-size:12.2px;line-height:12.2px;transform:scaleX(0.9181);color:#141414;-webkit-text-stroke:0.2px #141414;">Lorem ipsum dolor sit</div>
<div class="tx" style="left:947.28px;top:684.16px;font-size:12.2px;line-height:12.2px;transform:scaleX(0.9181);color:#141414;-webkit-text-stroke:0.2px #141414;">Lorem ipsum dolor sit</div>
<div class="tx" style="left:647.15px;top:689.14px;font-size:11.4px;line-height:11.4px;transform:scaleX(0.8471);color:#141414;-webkit-text-stroke:0.2px #141414;">BPH_WEST1000</div>
<div class="num" style="top:704.34px;font-size:12.0px;line-height:12.0px">26</div>
<div class="tx" style="left:44.23px;top:704.50px;font-size:12.2px;line-height:12.2px;transform:scaleX(0.8681);color:#141414;-webkit-text-stroke:0.2px #141414;">Success: Record Validated</div>
<div class="tx" style="left:195.30px;top:704.50px;font-size:12.2px;line-height:12.2px;transform:scaleX(0.8990);color:#141414;-webkit-text-stroke:0.2px #141414;">Natevba Campaign</div>
<div class="tx" style="left:346.00px;top:704.50px;font-size:12.2px;line-height:12.2px;transform:scaleX(0.8203);color:#141414;-webkit-text-stroke:0.2px #141414;">0013C00000KiTOXUa1</div>
<div class="tx" style="left:496.70px;top:704.50px;font-size:12.2px;line-height:12.2px;transform:scaleX(0.8543);color:#141414;-webkit-text-stroke:0.2px #141414;">0054P000009N104</div>
<div class="tx" style="left:796.88px;top:704.50px;font-size:12.2px;line-height:12.2px;transform:scaleX(0.9181);color:#141414;-webkit-text-stroke:0.2px #141414;">Lorem ipsum dolor sit</div>
<div class="tx" style="left:947.28px;top:704.50px;font-size:12.2px;line-height:12.2px;transform:scaleX(0.9181);color:#141414;-webkit-text-stroke:0.2px #141414;">Lorem ipsum dolor sit</div>
<div class="tx" style="left:647.15px;top:709.48px;font-size:11.4px;line-height:11.4px;transform:scaleX(0.8471);color:#141414;-webkit-text-stroke:0.2px #141414;">BPH_WEST1000</div>
<div class="num" style="top:724.68px;font-size:12.0px;line-height:12.0px">27</div>
<div class="tx" style="left:44.23px;top:724.84px;font-size:12.2px;line-height:12.2px;transform:scaleX(0.8681);color:#141414;-webkit-text-stroke:0.2px #141414;">Success: Record Validated</div>
<div class="tx" style="left:195.30px;top:724.84px;font-size:12.2px;line-height:12.2px;transform:scaleX(0.8990);color:#141414;-webkit-text-stroke:0.2px #141414;">Natevba Campaign</div>
<div class="tx" style="left:346.00px;top:724.84px;font-size:12.2px;line-height:12.2px;transform:scaleX(0.8203);color:#141414;-webkit-text-stroke:0.2px #141414;">0013C00000KiTOXUa1</div>
<div class="tx" style="left:496.70px;top:724.84px;font-size:12.2px;line-height:12.2px;transform:scaleX(0.8543);color:#141414;-webkit-text-stroke:0.2px #141414;">0054P000009N104</div>
<div class="tx" style="left:796.88px;top:724.84px;font-size:12.2px;line-height:12.2px;transform:scaleX(0.9181);color:#141414;-webkit-text-stroke:0.2px #141414;">Lorem ipsum dolor sit</div>
<div class="tx" style="left:947.28px;top:724.84px;font-size:12.2px;line-height:12.2px;transform:scaleX(0.9181);color:#141414;-webkit-text-stroke:0.2px #141414;">Lorem ipsum dolor sit</div>
<div class="tx" style="left:647.15px;top:729.82px;font-size:11.4px;line-height:11.4px;transform:scaleX(0.8471);color:#141414;-webkit-text-stroke:0.2px #141414;">BPH_WEST1000</div>
</div>

<div class="abs" style="left:568px;top:746px;width:18px;height:18px;border:1px solid #c8c8c8;background:#fbfbfb;border-radius:3.5px"></div>
<div class="btn" style="left:759.5px;top:741px;width:81.5px;height:29px"></div>
<div class="btn" style="left:849.5px;top:741px;width:103.5px;height:28.5px"></div>
<svg class="abs" style="left:861px;top:747px" width="13" height="17" viewBox="0 0 13 17"><rect x="3.6" y="1.5" width="8.4" height="12.3" rx="1.5" fill="none" stroke="#1a1a1a" stroke-width="1.05"/><path d="M1.5 3.3 V13.2 A2.5 2.5 0 0 0 4 15.7 H9.6" fill="none" stroke="#1a1a1a" stroke-width="1.05"/></svg>
<div class="abs" style="left:961px;top:740.5px;width:133px;height:29.5px;background:#0556b3;border-radius:4px;border:1px solid #0556b3;border-top-color:#1e67bb;border-bottom-color:#03489a"></div>
<svg class="abs" style="left:974px;top:747px" width="12" height="15" viewBox="0 0 12 15"><rect x="1" y="2.9" width="9" height="1" fill="#fff"/><path d="M5.5 5.6 V13.9 M1.9 8.9 L5.5 5.3 L9.1 8.9" stroke="#fff" stroke-width="1" fill="none"/></svg>
<div class="tx" style="left:42.94px;top:8.00px;font-size:11.3px;line-height:11.3px;transform:scaleX(0.9636);color:#141414;-webkit-text-stroke:0.2px #141414;">Data Grid Loader - Campaign Targets</div>
<div class="tx" style="left:13.92px;top:54.00px;font-size:18.8px;line-height:18.8px;transform:scaleX(0.9808);color:#141414;-webkit-text-stroke:0.6px #141414;">Load Campaign Targets</div>
<div class="tx" style="left:13.00px;top:87.00px;font-size:14.3px;line-height:14.3px;transform:scaleX(0.9014);color:#141414;-webkit-text-stroke:0.2px #141414;">Used for importing Campaign Targets across Campaigns. Make sure to download and fill out the Excel template file with all required fields. Target Account an...</div>
<div class="tx" style="left:63.80px;top:142.00px;font-size:12.9px;line-height:12.9px;transform:scaleX(1.0189);color:#141414;-webkit-text-stroke:0.6px #141414;">Validation Warning</div>
<div class="tx" style="left:184.00px;top:141.00px;font-size:13.0px;line-height:13.0px;transform:scaleX(0.9987);color:#141414;-webkit-text-stroke:0.2px #141414;">89 rows ready to import. 4 rows with validation errors.</div>
<div class="tx" style="left:916.60px;top:142.00px;font-size:12.9px;line-height:12.9px;transform:scaleX(0.9850);color:#141414;-webkit-text-stroke:0.2px #141414;">Only Show Validation Errors</div>
<div class="tx" style="left:968.99px;top:56.00px;font-size:12.8px;line-height:12.8px;transform:scaleX(1.0144);color:#141414;-webkit-text-stroke:0.2px #141414;">Download Template</div>
<div class="tx" style="left:13.70px;top:750.00px;font-size:13.2px;line-height:13.2px;transform:scaleX(0.9302);color:#141414;-webkit-text-stroke:0.2px #141414;">Total Rows: 93</div>
<div class="tx" style="left:593.32px;top:750.00px;font-size:12.8px;line-height:12.8px;transform:scaleX(0.9770);color:#9e9e9e;-webkit-text-stroke:0.2px #9e9e9e;">Data Includes Header Row</div>
<div class="tx" style="left:770.70px;top:749.00px;font-size:13.0px;line-height:13.0px;transform:scaleX(0.9222);color:#141414;-webkit-text-stroke:0.2px #141414;">Clear Data</div>
<div class="tx" style="left:882.60px;top:749.00px;font-size:13.0px;line-height:13.0px;transform:scaleX(0.9419);color:#141414;-webkit-text-stroke:0.2px #141414;">Copy Data</div>
<div class="tx" style="left:993.59px;top:750.00px;font-size:12.8px;line-height:12.8px;transform:scaleX(1.0070);color:#ffffff;-webkit-text-stroke:0.2px #ffffff;">Upload to CRM</div>
<div class="tx" style="left:44.20px;top:176.00px;font-size:11.7px;line-height:11.7px;transform:scaleX(0.8848);color:#666666;-webkit-text-stroke:0.2px #666666;">Status</div>
<div class="tx" style="left:194.90px;top:176.00px;font-size:11.7px;line-height:11.7px;transform:scaleX(0.9226);color:#666666;-webkit-text-stroke:0.2px #666666;">Campaign</div>
<div class="tx" style="left:346.00px;top:176.00px;font-size:11.7px;line-height:11.7px;transform:scaleX(0.9351);color:#666666;-webkit-text-stroke:0.2px #666666;">Target Account</div>
<div class="tx" style="left:496.30px;top:176.00px;font-size:11.7px;line-height:11.7px;transform:scaleX(0.9143);color:#666666;-webkit-text-stroke:0.2px #666666;">Target Owner User</div>
<div class="tx" style="left:646.40px;top:176.00px;font-size:11.7px;line-height:11.7px;transform:scaleX(0.9476);color:#666666;-webkit-text-stroke:0.2px #666666;">Territory</div>
<div class="tx" style="left:796.30px;top:176.00px;font-size:11.7px;line-height:11.7px;transform:scaleX(0.9037);color:#666666;-webkit-text-stroke:0.2px #666666;">BPH External Dataloade...</div>
<div class="tx" style="left:946.57px;top:176.00px;font-size:11.7px;line-height:11.7px;transform:scaleX(0.9285);color:#666666;-webkit-text-stroke:0.2px #666666;">BPH External Integratio...</div>
</body></html>
